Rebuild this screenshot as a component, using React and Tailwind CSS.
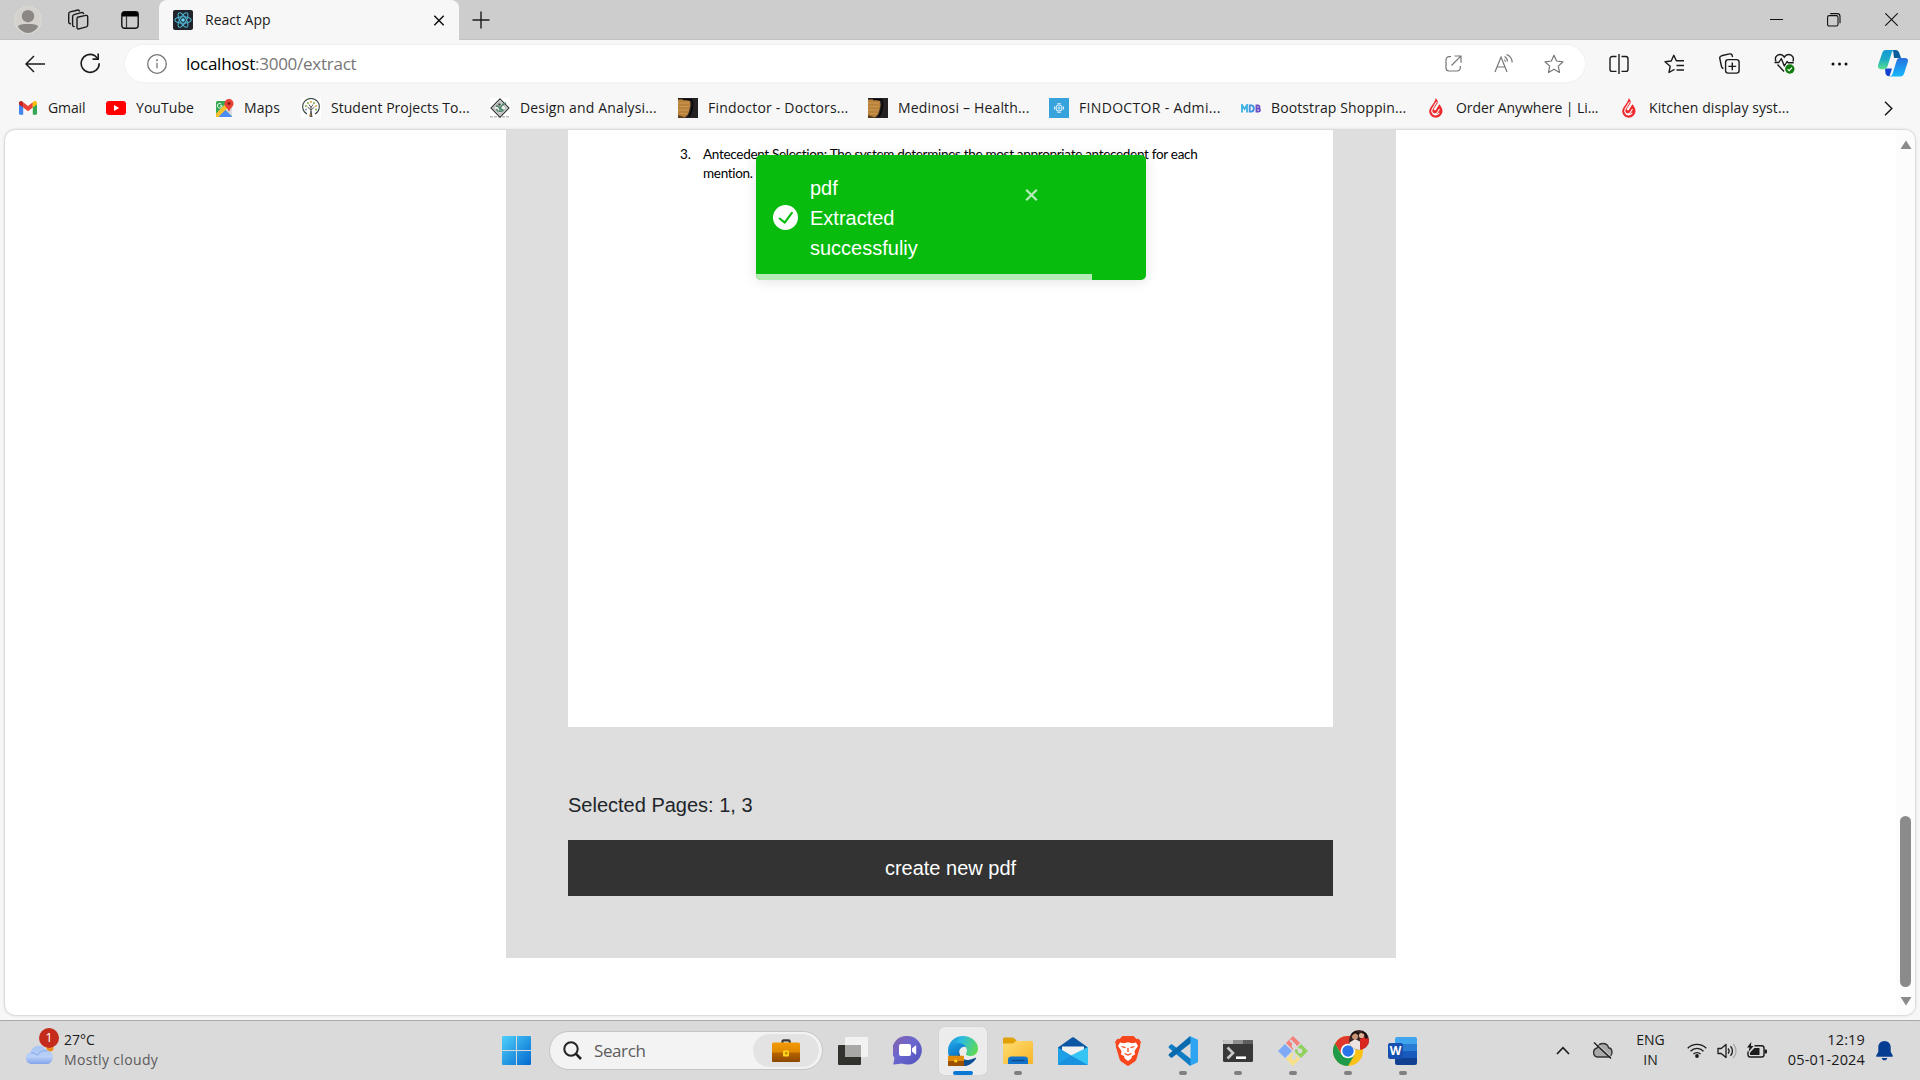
import React from "react";

const Svg = ({ w = 20, h = 20, vb, children, className = "" }) => (
  <svg width={w} height={h} viewBox={vb || `0 0 ${w} ${h}`} fill="none" className={`block shrink-0 ${className}`}>
    {children}
  </svg>
);

/* ---------- Tab strip ---------- */

function ReactIcon() {
  return (
    <Svg>
      <rect width="20" height="20" rx="2" fill="#20232a" />
      <g stroke="#4fb5d3" strokeWidth="1.1">
        <ellipse cx="10" cy="10" rx="8.2" ry="3.2" />
        <ellipse cx="10" cy="10" rx="8.2" ry="3.2" transform="rotate(60 10 10)" />
        <ellipse cx="10" cy="10" rx="8.2" ry="3.2" transform="rotate(120 10 10)" />
      </g>
      <circle cx="10" cy="10" r="1.8" fill="#61dafb" />
    </Svg>
  );
}

function TabStrip() {
  return (
    <div className="flex h-10 items-start bg-[#cdcdcd]">
      <div className="flex h-10 w-[159px] items-center border-b border-[#c2c2c2] pl-[14px]">
        <Svg w={28} h={28}>
          <circle cx="14" cy="14" r="13.4" fill="#d5d2ce" stroke="#dddad6" />
          <circle cx="14" cy="10.2" r="6.2" fill="#8a8784" />
          <path d="M3.8 20.5C5.500 18.600 8 18 14 18s8.500.6 10.200 2.500A13 13 0 0 1 14 27 13 13 0 0 1 3.800 20.500z" fill="#8a8784" />
        </Svg>
        <Svg w={22} h={21} className="ml-[25px]">
          <g stroke="#1b1b1b" strokeWidth="1.4" strokeLinejoin="round" strokeLinecap="round">
            <path d="M10.500 8.300l8.300-1.900c1-.2 1.900.4 1.900 1.500v8c0 .9-.5 1.600-1.400 1.900l-7.300 2.100c-1.100.3-2-.4-2-1.500v-8.300c0-.9.1-1.500.5-1.800z" />
            <path d="M7.300 17.600c-1 0-1.700-.7-1.700-1.700V7.600c0-1 .5-1.700 1.500-2l7-2c1.200-.3 1.900 0 2.500.8" />
            <path d="M3.400 14.800c-1-.2-1.700-.9-1.700-1.800V4.900c0-1 .5-1.700 1.500-2l6.800-1.700c1.100-.3 1.900 0 2.400.7" />
          </g>
        </Svg>
        <Svg w={18} h={18} className="ml-8">
          <rect x=".8" y=".8" width="16.400" height="16.400" rx="2.600" stroke="#111" strokeWidth="1.4" />
          <path d="M1 5.500V3a2 2 0 0 1 2-2h12a2 2 0 0 1 2 2v2.500z" fill="#000" />
          <path d="M5.500 5v12" stroke="#333" strokeWidth="1.2" />
        </Svg>
      </div>
      <div className="flex h-10 w-[300px] items-center rounded-t-lg bg-[#f7f7f7] pl-[14px] pr-[14px]">
        <ReactIcon />
        <span className="mb-0.5 ml-3 text-[14px] text-[#1b1b1b]">React App</span>
        <Svg w={12} h={12} className="ml-auto">
          <path d="M1.300 1.800l9.400 9.400M10.700 1.800l-9.400 9.400" stroke="#111" strokeWidth="1.5" />
        </Svg>
      </div>
      <div className="flex h-10 grow items-center border-b border-[#c2c2c2] pl-[13px] pr-[22px]">
        <Svg w={18} h={18}>
          <path d="M9 .5v17M.5 9h17" stroke="#1b1b1b" strokeWidth="1.4" />
        </Svg>
        <Svg w={13} h={13} className="ml-auto">
          <path d="M0 6.500h13" stroke="#111" />
        </Svg>
        <Svg w={14} h={14} className="ml-11">
          <rect x=".6" y="2.600" width="10.400" height="10.400" rx="1.600" stroke="#111" strokeWidth="1.100" />
          <path d="M3.200.6h7c1.600 0 2.800 1.200 2.800 2.800v6.800" stroke="#111" strokeWidth="1.100" />
        </Svg>
        <Svg w={13} h={13} className="ml-11">
          <path d="M.3.3l12.400 12.400M12.700.3L.3 12.700" stroke="#111" strokeWidth="1.100" />
        </Svg>
      </div>
    </div>
  );
}

/* ---------- Address bar ---------- */

const STAR = "M10 1.300l2.600 5.700 6.400.8-4.700 4.300 1.200 6.300L10 15.200l-5.500 3.200 1.200-6.300L1 7.800l6.400-.8z";

function Copilot() {
  return (
    <Svg w={30} h={27}>
      <defs>
        <linearGradient id="cpA" x1="0" y1="0" x2="0" y2="1">
          <stop offset="0" stopColor="#139bd8" />
          <stop offset=".5" stopColor="#1dabc4" />
          <stop offset="1" stopColor="#5be08e" />
        </linearGradient>
        <linearGradient id="cpB" x1="0" y1="0" x2="0" y2="1">
          <stop offset="0" stopColor="#2870de" />
          <stop offset="1" stopColor="#17b8fb" />
        </linearGradient>
      </defs>
      <path d="M15 0h2.500c2.300 0 3.300 1.300 3.900 3.300L23 8h-7z" fill="#0b5d9b" />
      <path d="M7 18.500h7l-2.500 7.800c-2 .2-3.500-1-4-3z" fill="#1440cf" />
      <path d="M7.500 0H17c-2 0-2.900 1.500-3.500 3.500l-4 13c-.5 1.600-1.500 2.700-3.500 2.700H3c-2.500 0-3.600-2-2.700-4.700L4.200 3C4.900 1 6 0 7.500 0z" fill="url(#cpA)" />
      <path d="M22.500 26.500H11c2 0 3.200-1.500 3.800-3.500l3.900-12.500C19.300 8.800 20.300 8 22 8h5c2.500 0 3.500 1.700 2.700 4.300l-3.600 11.200c-.7 2-1.900 3-3.600 3z" fill="url(#cpB)" />
    </Svg>
  );
}

function Toolbar() {
  return (
    <div className="flex h-12 items-center bg-[#f7f7f7] pb-px pl-[25px] pr-3">
      <Svg w={20} h={18}>
        <path d="M9 1L1 9l8 8M1 9h19" stroke="#1b1b1b" strokeWidth="1.5" />
      </Svg>
      <Svg w={21} h={21} className="ml-[35px]">
        <path d="M19.200 10.200A9 9 0 1 1 14.500 2.500l3.200 3" stroke="#1b1b1b" strokeWidth="1.600" />
        <path d="M18.200.5v5.600h-5.600" stroke="#1b1b1b" strokeWidth="1.600" />
      </Svg>
      <div className="ml-6 flex h-[37px] w-[1460px] items-center rounded-full bg-white pl-[22px] pr-[21px] shadow-[0_0_3px_rgba(0,0,0,0.06)]">
        <Svg>
          <circle cx="10" cy="10" r="9.300" stroke="#767676" strokeWidth="1.300" />
          <path d="M10 8.800v5.400" stroke="#767676" strokeWidth="1.300" />
          <circle cx="10" cy="6.200" r="1" fill="#767676" />
        </Svg>
        <span className="ml-[19px] text-[17px] leading-6 tracking-[-0.25px] text-[#767676]">
          <span className="text-black">localhost</span>:3000/extract
        </span>
        <Svg w={17} h={17} className="ml-auto">
          <path d="M6 1.700H4A3 3 0 0 0 1 4.700V13a3 3 0 0 0 3 3h8.300a3 3 0 0 0 3-3v-2M9.500 1h6.500v6.500M15.800 1.200L6.500 10.500" stroke="#767676" strokeWidth="1.200" />
        </Svg>
        <Svg w={20} h={19} className="ml-8">
          <path d="M1 18L7 3l6 15M3 13h8M10.500 2.500c1.600.8 2.800 2.600 3 5M12.500.5c3.300 1.200 5.500 4.500 5.700 8" stroke="#767676" strokeWidth="1.200" />
          <path d="M10 5.500c.9.500 1.400 1.300 1.500 2.500" stroke="#767676" />
        </Svg>
        <Svg className="ml-[30px]">
          <path d={STAR} stroke="#767676" strokeWidth="1.200" strokeLinejoin="round" />
        </Svg>
      </div>
      <Svg className="ml-6">
        <path d="M7.500 2.500H3.200A2.200 2.200 0 0 0 1 4.700v10.500c0 1.200 1 2.200 2.200 2.200h4.300M12.500 2.500h4.200C18 2.500 19 3.500 19 4.700v10.500c0 1.200-1 2.200-2.200 2.200h-4.300M10 0v20" stroke="#1b1b1b" strokeWidth="1.400" />
      </Svg>
      <Svg w={21} h={20} className="ml-[35px]">
        <path d="M10.500 15.300L5 18.500l1.200-6.200L1 7.800l6.200-.8L9.800 1.300l2.500 5.500H20M12.500 11.500H20M12.500 16H20" stroke="#1b1b1b" strokeWidth="1.400" strokeLinejoin="round" />
      </Svg>
      <Svg w={21} h={21} className="ml-[34px]">
        <rect x="6.600" y="6.600" width="13.500" height="13.500" rx="2.600" stroke="#1b1b1b" strokeWidth="1.400" />
        <path d="M13.300 9.500v7.800M9.400 13.400h7.800M4.500 15.500c-1.200-.2-1.800-1-2-2L.8 5.500C.5 4 1.200 3.200 2.500 2.800l8-1.900c1.500-.3 2.500.5 2.700 1.700l.4 1.400" stroke="#1b1b1b" strokeWidth="1.400" />
      </Svg>
      <Svg w={22} h={21} className="ml-[34px]">
        <path d="M2 8.500C.3 5 2.500 1.500 5.800 1.500c2 0 3.500 1 4.500 2.700 1-1.700 2.600-2.700 4.600-2.700 3.300 0 5.500 3.500 4 7M3.500 11.500l6.500 7" stroke="#1b1b1b" strokeWidth="1.400" />
        <path d="M.5 9.500h4.300l2.500-4 3 7.500 2.800-4.500 1.100 1.200h5.500" stroke="#1b1b1b" strokeWidth="1.400" strokeLinejoin="round" />
        <circle cx="15.800" cy="16" r="4.700" fill="#107c10" />
        <path d="M13.600 16.200l1.500 1.500 2.900-3" stroke="#fff" strokeWidth="1.200" />
      </Svg>
      <Svg w={17} h={4} className="ml-[35px]">
        <circle cx="2" cy="2" r="1.500" fill="#111" />
        <circle cx="8.500" cy="2" r="1.500" fill="#111" />
        <circle cx="15" cy="2" r="1.500" fill="#111" />
      </Svg>
      <span className="ml-auto"><Copilot /></span>
    </div>
  );
}

/* ---------- Bookmarks ---------- */

const Gmail = () => (
  <Svg w={18} h={14}>
    <path d="M0 1.800L4.200 5v8.800H1.300C.6 13.800 0 13.200 0 12.500z" fill="#4285f4" />
    <path d="M18 1.800L13.800 5v8.800h2.900c.7 0 1.300-.6 1.300-1.300z" fill="#34a853" />
    <path d="M4.200 1.300L9 5l4.800-3.700v5.300L9 10.200 4.200 6.600z" fill="#ea4335" />
    <path d="M0 2C0 .3 1.900-.6 3.200.5l1 .8v5.300L0 3.500z" fill="#c5221f" />
    <path d="M18 2c0-1.700-1.900-2.600-3.200-1.500l-1 .8v5.300L18 3.500z" fill="#fbbc04" />
  </Svg>
);
const YouTube = () => (
  <Svg w={20} h={14}>
    <rect width="20" height="14" rx="3" fill="#f00" />
    <path d="M8 4l5.200 3L8 10z" fill="#fff" />
  </Svg>
);
const Maps = () => (
  <Svg w={19} h={19}>
    <rect x="1" y="2" width="16" height="16" rx="1.500" fill="#34a853" />
    <path d="M17 7v10.500L9.500 10z" fill="#dadce0" />
    <path d="M1.500 18L9.300 10l7.500 8z" fill="#4285f4" />
    <path d="M1 14.500L13 2.500l3 3L3.500 18H1z" fill="#fbc02d" />
    <path d="M5 18l6-6 6 6z" fill="#4b8df8" />
    <path d="M7 6.500a2.300 2.300 0 1 1-.8-1.500M5 6.800h2" stroke="#fff" strokeWidth="1" />
    <path d="M14 0a4.500 4.500 0 0 1 4.500 4.500C18.500 8 15 9 14 13c-1-4-4.500-5-4.500-8.500A4.500 4.500 0 0 1 14 0z" fill="#e84335" />
    <circle cx="14" cy="4.500" r="1.600" fill="#8c1b12" />
  </Svg>
);
const Tree = () => (
  <Svg>
    <rect width="20" height="20" fill="#fff" />
    <path d="M6 16A8.300 8.300 0 1 1 14 16" stroke="#3d4a44" strokeWidth="1.100" />
    <path d="M10 9v9M10 12L6.500 9M10 12l3.500-3M10 9.500L8 6.500M10 9.500l2-3" stroke="#555" strokeWidth="1" />
    <path d="M8.500 19l1-6h1l1 6z" fill="#555" />
    <g fill="#7fae3e">
      <circle cx="5" cy="8" r="1" /><circle cx="7" cy="5" r="1" /><circle cx="13" cy="5" r="1" />
    </g>
    <g fill="#e0a53c">
      <circle cx="10" cy="4" r="1" /><circle cx="15" cy="8" r="1" /><circle cx="9" cy="17" r=".9" />
    </g>
    <circle cx="5" cy="11.500" r=".9" fill="#6b8f9d" /><circle cx="15" cy="11.500" r=".9" fill="#6d9b42" />
  </Svg>
);
const Diamond = () => (
  <Svg>
    <rect width="20" height="20" fill="#fff" />
    <path d="M0 18.800h20" stroke="#bbb" strokeWidth="1.500" strokeDasharray="3 1" />
    <path d="M10 .8l9 9.200-9 9.200L1 10z" fill="#eef0ef" stroke="#333" strokeWidth="1.100" />
    <path d="M10 3.500l6.400 6.500-6.400 6.500L3.600 10z" stroke="#777" strokeWidth=".8" />
    <path d="M6 8c2 0 3.500 1 4 3 .8-3 3-5 6-6M6.500 11c1 3 5 3.500 7 .5M7.500 7.500l5 5" stroke="#4b8466" strokeWidth="1.500" />
    <circle cx="9.500" cy="6.500" r="1.200" fill="#38413c" />
  </Svg>
);
const Brush = () => (
  <Svg>
    <rect width="20" height="20" fill="#262224" />
    <path d="M0 1.500h6l6 1.500.5 4-1 5-1.500 4.500-3 3L3 19l-3-1.500z" fill="#b9823c" />
    <path d="M0 5h11M1 8.500h10M0 12h10.500M2 15.500h7" stroke="#cc9850" strokeWidth="1" />
    <path d="M5 1.500h8l1.500 2c.3 5-.8 10.500-3.500 15" stroke="#080808" strokeWidth="1.600" />
    <path d="M0 17l6 2v1H0z" fill="#5a3d1b" />
  </Svg>
);
const Findoctor = () => (
  <Svg>
    <rect width="20" height="20" fill="#37a3dd" />
    <g stroke="#d8effb" strokeWidth="1.100">
      <circle cx="10" cy="10" r="3" />
      <path d="M8 5.800h4M8 14.200h4M5.500 8.500v3M14.500 8.500v3M8.500 10h3M10 8.500v3" />
    </g>
  </Svg>
);
const Mdb = () => (
  <Svg h={9}>
    <g strokeWidth="1.900">
      <path d="M1 8.500V1l2.500 4L6 1v7.500" stroke="#41b4e6" />
      <path d="M8.700 1.400v6.200h1.500c3.500 0 3.500-6.200 0-6.200z" stroke="#3f93df" />
      <path d="M15.500 1.400v6.200h2c2 0 2-3 0-3h-2 1.700c1.700 0 1.700-3.200 0-3.200z" stroke="#6a4fc8" />
    </g>
  </Svg>
);
const Flame = () => (
  <Svg w={14} h={20}>
    <path d="M6.800 0c1 1.800 2.600 3 1.700 5.200L5 10.500c-.8 1.400 1 2.600 2 1.200l3.300-5.400C12 8.300 13.800 11 13.500 13.500 13 17 10 19.700 6.800 19.700S.5 17.200.2 13.500C0 9.500 5.800 5.500 6.800 0z" fill="#ee2a2e" />
    <path d="M7.500 4L3.300 11c-2 4 3 6.600 5.200 3.200l2-3.200M3.500 15.500c1.500 2 5 2 6.800-.7" stroke="#f7f7f7" strokeWidth="1.100" />
  </Svg>
);

const BOOKMARKS = [
  { icon: Gmail, label: "Gmail", cell: "w-[87px]", gap: "w-[29px]", track: "tracking-[-0.1px]" },
  { icon: YouTube, label: "YouTube", cell: "w-[109px]", gap: "w-[30px]", track: "tracking-[0.05px]" },
  { icon: Maps, label: "Maps", cell: "w-[86px]", gap: "w-[29px]", track: "tracking-[0.1px]" },
  { icon: Tree, label: "Student Projects To...", cell: "w-[189px]", gap: "w-[30px]", track: "tracking-[0.03px]" },
  { icon: Diamond, label: "Design and Analysi...", cell: "w-[188px]", gap: "w-[30px]", track: "tracking-[0.15px]" },
  { icon: Brush, label: "Findoctor - Doctors...", cell: "w-[190px]", gap: "w-[30px]", track: "tracking-[0.2px]" },
  { icon: Brush, label: "Medinosi – Health...", cell: "w-[181px]", gap: "w-[30px]", track: "tracking-[0.17px]" },
  { icon: Findoctor, label: "FINDOCTOR - Admi...", cell: "w-[192px]", gap: "w-[30px]", track: "tracking-[0.33px]" },
  { icon: Mdb, label: "Bootstrap Shoppin...", cell: "w-[188px]", gap: "w-[30px]", track: "tracking-[0.1px]" },
  { icon: Flame, label: "Order Anywhere | Li...", cell: "w-[193px]", gap: "w-[27px]", track: "tracking-[-0.1px]" },
  { icon: Flame, label: "Kitchen display syst...", cell: "w-[190px]", gap: "w-[27px]", track: "tracking-[0.09px]" },
];

function Bookmarks() {
  return (
    <div className="flex h-[41px] items-center bg-[#f7f7f7] pb-px pl-[19px] pr-[27px]">
      {BOOKMARKS.map(({ icon: Icon, label, cell, gap, track }, i) => (
        <div key={i} className={`flex shrink-0 items-center ${cell}`}>
          <span className={`shrink-0 ${gap}`}><Icon /></span>
          <span className={`whitespace-nowrap pb-px text-[14px] leading-5 text-[#1b1b1b] ${track}`}>{label}</span>
        </div>
      ))}
      <Svg w={9} h={15} className="ml-auto">
        <path d="M1 .7l6.800 6.800L1 14.300" stroke="#1b1b1b" strokeWidth="1.500" />
      </Svg>
    </div>
  );
}

/* ---------- Page ---------- */

function Toast() {
  return (
    <div className="absolute left-[751px] top-[25px] flex h-[125px] w-[390px] flex-col overflow-hidden rounded-[5px] bg-[#07bc0c] font-['Liberation_Sans',sans-serif] text-[20px] leading-[30px] text-white shadow-[0_1px_13px_rgba(0,0,0,0.12)]">
      <div className="flex h-[119px] items-start pl-[17px] pt-[18px]">
        <Svg w={25} h={25} vb="0 0 24 24" className="mt-8">
          <path fill="#fff" d="M12 0a12 12 0 1012 12A12.014 12.014 0 0012 0zm6.927 8.200l-6.845 9.289a1.011 1.011 0 01-1.430.188l-4.888-3.908a1 1 0 111.250-1.562l4.076 3.261 6.227-8.451a1 1 0 111.610 1.183z" />
        </Svg>
        <p className="ml-3 w-[120px]">pdf<br />Extracted<br />successfuliy</p>
        <Svg w={13} h={14} className="ml-[95px] mt-[15px]">
          <path d="M1.200 1.700l10.600 10.600M11.800 1.700L1.200 12.300" stroke="#b5ebb6" strokeWidth="2.300" />
        </Svg>
      </div>
      <div className="h-1.5 w-[336px] bg-[#b5ebb6]" />
    </div>
  );
}

function Page() {
  return (
    <div className="flex h-[891px] flex-col bg-[#f7f7f7] px-[5px] pt-px">
      <div className="relative flex h-[885px] overflow-hidden rounded-[10px] bg-white shadow-[0_0_3px_rgba(0,0,0,0.3)]">
        <main className="ml-[501px] h-[828px] w-[890px] bg-[#dedede] pl-[62px] pr-[63px] font-['Liberation_Sans',sans-serif] text-[20px] text-[#212529]">
          <section className="h-[597px] bg-white pt-[15px] font-[Lato,sans-serif] text-[13.500px] leading-[19px] text-black">
            <div className="flex pl-[112px]">
              <span className="w-[23px] shrink-0">3.</span>
              <p className="whitespace-nowrap tracking-[-0.3px]">
                Antecedent Selection: The system determines the most appropriate antecedent for each<br />mention.
              </p>
            </div>
          </section>
          <p className="mt-[63px] leading-[30px]">Selected Pages: 1, 3</p>
          <button className="mt-5 block h-14 w-full bg-[#333] text-white">create new pdf</button>
        </main>
        <aside className="ml-auto flex w-[19px] flex-col items-center bg-[#fcfcfc] pb-[9px] pt-[10px]">
          <Svg w={12} h={9}><path d="M6 .5L11.500 9H.5z" fill="#8b8b8b" /></Svg>
          <div className="mt-auto h-[171px] w-[11px] rounded-full bg-[#8b8b8b]" />
          <Svg w={12} h={9} className="mt-[10px]"><path d="M6 8.500L.5 0h11z" fill="#8b8b8b" /></Svg>
        </aside>
        <Toast />
      </div>
    </div>
  );
}

/* ---------- Taskbar ---------- */

const Windows = () => (
  <Svg w={29} h={29}>
    <defs>
      <linearGradient id="win" x1="0" y1="0" x2="29" y2="29" gradientUnits="userSpaceOnUse">
        <stop stopColor="#4fd0fb" />
        <stop offset="1" stopColor="#0268cf" />
      </linearGradient>
    </defs>
    <path d="M1 0h13v14H0V1a1 1 0 0 1 1-1zM15 0h13a1 1 0 0 1 1 1v13H15zM0 15h14v14H1a1 1 0 0 1-1-1zM15 15h14v13a1 1 0 0 1-1 1H15z" fill="url(#win)" />
  </Svg>
);

const Briefcase = ({ w = 28, h = 24, className }) => (
  <Svg w={w} h={h} vb="0 0 28 24" className={className}>
    <defs>
      <linearGradient id="bcT" x1="0" y1="0" x2="0" y2="1"><stop stopColor="#f39a06" /><stop offset="1" stopColor="#cb7600" /></linearGradient>
      <linearGradient id="bcB" x1="0" y1="0" x2="0" y2="1"><stop stopColor="#b96500" /><stop offset="1" stopColor="#8b4700" /></linearGradient>
    </defs>
    <path d="M10.500 4V2.500c0-.7.500-1.200 1.200-1.200h4.800c.7 0 1.200.5 1.200 1.200V4" stroke="#383838" strokeWidth="2.200" />
    <rect y="3.500" width="28" height="19.500" rx="1.500" fill="url(#bcT)" />
    <path d="M0 13.500h28v8c0 1-.7 1.500-1.500 1.500h-25C.7 23 0 22.500 0 21.500z" fill="url(#bcB)" />
    <rect x="11" y="11.500" width="6" height="6" rx="1" fill="#ffd61c" />
    <rect x="13" y="13" width="2.500" height="2.500" fill="#c98c00" />
  </Svg>
);

const TaskView = () => (
  <Svg w={30} h={28}>
    <rect y="8" width="23" height="20" rx="1" fill="#31312e" />
    <rect x="7" width="23" height="20" rx="1" fill="#f5f5f5" opacity=".88" />
    <path d="M7 8h16v12H7z" fill="#a8a8a6" />
  </Svg>
);

const Chat = () => (
  <Svg w={29} h={29}>
    <defs>
      <linearGradient id="chat" x1="0" y1="0" x2="1" y2="1"><stop stopColor="#8a63a8" /><stop offset=".45" stopColor="#6b67cf" /><stop offset="1" stopColor="#4e51bb" /></linearGradient>
    </defs>
    <path d="M14.500 0A14.300 14.300 0 1 1 9 27.500L1 28.500c-.6 0-.8-.4-.6-1l1-5.500A14.300 14.300 0 0 1 14.500 0z" fill="url(#chat)" />
    <rect x="6" y="8" width="12" height="12" rx="2" fill="#fff" />
    <path d="M19 12.500l3.500-3c.4-.3.700 0 .7.400v8.200c0 .4-.3.700-.7.400l-3.500-3z" fill="#fff" />
  </Svg>
);

const Edge = () => (
  <Svg w={30} h={30}>
    <defs>
      <linearGradient id="eA" x1="0" y1="0" x2="30" y2="14" gradientUnits="userSpaceOnUse"><stop stopColor="#1683d8" /><stop offset=".4" stopColor="#2bbbe4" /><stop offset="1" stopColor="#61dc4d" /></linearGradient>
      <linearGradient id="eB" x1="0" y1="8" x2="12" y2="30" gradientUnits="userSpaceOnUse"><stop stopColor="#1aa1e6" /><stop offset="1" stopColor="#0858b0" /></linearGradient>
    </defs>
    <path d="M0 14C.5 6 7 0 15 0c8.500 0 15 6 15 12.500 0 4.500-3 7.500-7 7.500-3.500 0-5.500-1-5-2.500.3-.8 1-1.300 1-3C19 11 15 8 10 8 5 8 1 10.500 0 14z" fill="url(#eA)" />
    <path d="M0 15c0-4.500 4-8 9.500-8 4 0 7 1.500 8.500 4-4-1.500-7 2-7 6 0 6 5 11 11 11-2 1.500-4.500 2-7 2C6.500 30 0 23.500 0 15z" fill="url(#eB)" />
    <path d="M11.500 15c-1 6 4.500 10 10 8.700 2.500-.4 4.500-1.500 6-2 .5-.1.900.3.6.8C25.500 27 20.500 30 15 30c-3 0-5-5-5-9z" fill="#0d4f91" />
    <g transform="translate(0 18) scale(.57 .52)">
      <rect y="3.500" width="28" height="20" rx="1.500" fill="#e08b0a" />
      <path d="M0 13.500h28v9.500H0z" fill="#9b5100" />
      <rect x="11" y="11" width="5" height="5" fill="#ffd61c" />
    </g>
  </Svg>
);

const Explorer = () => (
  <Svg w={30} h={28}>
    <defs>
      <linearGradient id="fx" x1="0" y1="0" x2="1" y2="1"><stop stopColor="#ffdd72" /><stop offset="1" stopColor="#f7b527" /></linearGradient>
    </defs>
    <path d="M0 2c0-1 .6-1.500 1.500-1.500h8c.7 0 1.200.2 1.700.7L14 4v8H0z" fill="#e0a008" />
    <path d="M0 6.500h10L13 4h15.500c.9 0 1.500.6 1.500 1.500v20c0 1-.6 1.500-1.500 1.500h-27C.6 27 0 26.500 0 25.500z" fill="url(#fx)" />
    <path d="M5 27v-4.500C5 20.600 6.600 19.500 8.300 19.500h13.400c1.700 0 3.300 1.100 3.300 3V27z" fill="#1273c8" />
    <path d="M8.500 23.500h13" stroke="#0a4b91" strokeWidth="1.500" />
  </Svg>
);

const Mail = () => (
  <Svg w={30} h={28}>
    <path d="M0 10.500L14 .5c.7-.5 1.300-.5 2 0l14 10V14H0z" fill="#0b57a3" />
    <path d="M4 9.500h22v6L15 21 4 15.500z" fill="#f1f1f1" />
    <path d="M0 10.500l15 9L30 10v17c0 .6-.4 1-1 1H1c-.6 0-1-.4-1-1z" fill="#1da0e6" />
    <path d="M30 10v17c0 .5-.4.800-.7.800L13 18.500z" fill="#35c4f3" />
    <path d="M13 18.500L29.500 28H1c-.7 0-1-.5-1-1z" fill="#1688dc" opacity=".65" />
  </Svg>
);

const VsCode = () => (
  <Svg w={30} h={30}>
    <path d="M.8 10.300l2-1.800c.5-.4 1-.4 1.500 0L23 23v6.500c-.7.200-1.400 0-2-.6L1 12c-.5-.5-.6-1.200-.2-1.700z" fill="#0f7cc4" />
    <path d="M.8 19.700l2 1.800c.5.4 1 .4 1.500 0L23 7V.5c-.7-.2-1.400 0-2 .6L1 18c-.5.500-.6 1.200-.2 1.700z" fill="#0a6ab0" />
    <path d="M22 .3l7 3c.6.300 1 .8 1 1.500v20.400c0 .7-.4 1.200-1 1.500l-7 3c-.7.300-1.300.2-1.800-.3 1 .5 2.300 0 2.300-1.400V2c0-1.400-1.300-1.900-2.300-1.400.5-.5 1.100-.6 1.800-.3z" fill="#2fa5f1" />
  </Svg>
);

const Terminal = () => (
  <Svg w={30} h={22}>
    <rect width="30" height="22" rx="1.500" fill="#383838" />
    <path d="M0 4V1.500C0 .5.5 0 1.500 0H10v4z" fill="#c6c6c6" />
    <path d="M10 0h10v4H10z" fill="#8f8f8f" />
    <path d="M20 0h8.500c1 0 1.500.5 1.500 1.500V4H20z" fill="#5e5e5e" />
    <path d="M4.500 7.500l5.500 5.500-5.500 5.500" stroke="#c9c9c9" strokeWidth="2.600" />
    <path d="M13 17.700h10" stroke="#fff" strokeWidth="2.600" />
  </Svg>
);

const Git = () => (
  <Svg w={30} h={30}>
    <path d="M15 0l7 7-7 7-7-7z" fill="#f47f7b" />
    <path d="M7 8l7 7-7 7-7-7z" fill="#7eaaf7" />
    <path d="M23 8l7 7-7 7-7-7z" fill="#8fd35e" />
    <path d="M15 16l7 7-7 7-7-7z" fill="#f8e08a" />
    <path d="M12 4l4 4v14M16 9l6 6" stroke="#dadada" strokeWidth="2" />
    <circle cx="16" cy="10" r="2.400" fill="#dadada" /><circle cx="22" cy="15" r="2.400" fill="#dadada" /><circle cx="16" cy="21.500" r="2.400" fill="#dadada" />
  </Svg>
);

const Chrome = () => (
  <span className="relative block">
    <Svg w={30} h={30}>
      <circle cx="15" cy="15" r="15" fill="#fbc116" />
      <path d="M2 7.500A15 15 0 0 1 28 7.500L15 8 9 18.800z" fill="#df382c" />
      <path d="M2 7.500A15 15 0 0 0 15 30l6.500-11.300H8.500z" fill="#1f9a4b" />
      <circle cx="15" cy="15" r="7.300" fill="#fff" />
      <circle cx="15" cy="15" r="5.700" fill="#2b73e8" />
    </Svg>
    <Svg className="absolute -top-[6px] left-4">
      <defs><clipPath id="av"><circle cx="10" cy="10" r="10" /></clipPath></defs>
      <g clipPath="url(#av)">
        <rect width="20" height="20" fill="#3d2725" />
        <path d="M0 13l6-4 6 3v8H0z" fill="#ece5e2" />
        <path d="M11 9l4-2 5 2v11h-9z" fill="#d9261f" />
        <circle cx="6" cy="6.500" r="3" fill="#c99376" />
        <circle cx="12.500" cy="5.500" r="2.600" fill="#deb096" />
        <path d="M3 5c1-4 6-4 6-.5M13 2.500c3-1 5 2 4 6" stroke="#1d1211" strokeWidth="2" />
      </g>
    </Svg>
  </span>
);

const Word = () => (
  <span className="relative flex h-7 w-[29px] justify-end">
    <span className="flex w-[22px] flex-col overflow-hidden rounded-[2px]">
      <span className="h-[7px] bg-[#41a5ee]" />
      <span className="h-[7px] bg-[#2b7cd3]" />
      <span className="h-[7px] bg-[#185abd]" />
      <span className="h-[7px] bg-[#103f91]" />
    </span>
    <span className="absolute left-0 top-1.5 flex h-4 w-[15px] items-center justify-center rounded-[2px] bg-[#1550b0] text-[12px] font-bold leading-none text-white">W</span>
  </span>
);

const BraveLion = () => (
  <Svg w={26} h={30}>
    <path d="M7.500 0h11l3 3 2-.3L26 6l-1 3 .3 1L21.500 23c-.4 1.300-1 2-2 2.700L14 29.500c-.7.500-1.300.5-2 0l-5.500-3.800c-1-.7-1.600-1.400-2-2.700L.7 10 1 9 0 6l2.500-3.300 2 .3z" fill="#f9471d" />
    <path d="M5 6.500l4 .7 4-.9 4 .9 4-.7 2 3.500-3.500 5 .5 3.500-3 1.500-.7 2.500L13 25l-3.300-2.500L9 20l-3-1.500.5-3.500L3 10z" fill="#fff" />
    <path d="M6.500 10.500l4 1.200M19.500 10.500l-4 1.200M13 12v4M9.500 17.500l3.500 1.500 3.500-1.500" stroke="#f9471d" strokeWidth="1.300" />
  </Svg>
);

const APPS = [
  { icon: TaskView },
  { icon: Chat },
  { icon: Edge, active: true },
  { icon: Explorer, running: true },
  { icon: Mail },
  { icon: BraveLion },
  { icon: VsCode, running: true },
  { icon: Terminal, running: true },
  { icon: Git, running: true },
  { icon: Chrome, running: true },
  { icon: Word, running: true },
];

function AppButton({ icon: Icon, active, running }) {
  return (
    <div className="flex w-[55px] justify-center">
      <div className={active ? "flex h-12 w-12 flex-col items-center rounded-[5px] bg-[#ececec] shadow-[0_0_1px_rgba(0,0,0,0.2)]" : "flex h-12 w-12 flex-col items-center"}>
        <span className="flex h-12 items-center"><Icon /></span>
        {active && <span className="-mt-1 h-1 w-5 shrink-0 rounded-full bg-[#0a78d4]" />}
        {running && <span className="-mt-1 h-1 w-2 shrink-0 rounded-full bg-[#808080]" />}
      </div>
    </div>
  );
}

function Weather() {
  return (
    <div className="flex w-[502px] items-center pl-[25px]">
      <span className="relative block h-[19px] w-[30px]">
        <Svg w={30} h={19} className="mt-1">
          <defs>
            <linearGradient id="cl" x1="0" y1="0" x2="0" y2="1"><stop stopColor="#a9c4f3" /><stop offset=".6" stopColor="#b9d0f7" /><stop offset="1" stopColor="#82a4ea" /></linearGradient>
          </defs>
          <circle cx="25" cy="3" r="3.500" fill="#ef8a1d" />
          <path d="M6 19a6 6 0 0 1-.5-11.800A8.300 8.300 0 0 1 20.800 5 7.200 7.200 0 0 1 23 19z" fill="url(#cl)" />
          <path d="M6 8c3-.5 5 .5 6.500 2.500C14 7 18 5 22 6" stroke="#7fa3e6" strokeWidth=".9" />
        </Svg>
        <span className="absolute -top-[13px] left-[14px] flex h-5 w-5 items-center justify-center rounded-full bg-[#c42b1c] pb-px text-[13px] leading-none text-white">1</span>
      </span>
      <div className="mb-0.5 ml-[9px] flex flex-col text-[14px] leading-5 text-[#1b1b1b]">
        <span>27°C</span>
        <span className="tracking-[0.35px] text-[#5a5a5a]">Mostly cloudy</span>
      </div>
    </div>
  );
}

function Taskbar() {
  return (
    <div className="flex h-[60px] items-center border-t border-[#a9a9a9] bg-[#dadada]">
      <Weather />
      <Windows />
      <div className="ml-[18px] mr-0.5 flex h-[39px] w-[274px] items-center rounded-full border border-[#c4c4c4] bg-[#f3f3f3] pl-[13px] pr-[3px]">
        <Svg w={19} h={19}>
          <circle cx="8" cy="8" r="6.700" stroke="#222" strokeWidth="2" />
          <path d="M12.700 12.700l5.300 5.300" stroke="#222" strokeWidth="2.600" />
        </Svg>
        <span className="ml-3 text-[17px] leading-6 tracking-[-0.4px] text-[#5c5c5c]">Search</span>
        <span className="ml-auto flex h-[33px] w-[66px] items-center justify-center rounded-full bg-[#e3e3e3]"><Briefcase /></span>
      </div>
      {APPS.map((app, i) => <AppButton key={i} {...app} />)}
      <div className="ml-auto flex items-center pr-[27px] text-[14px] leading-5 text-[#1b1b1b]">
        <Svg w={14} h={9}><path d="M1 8l6-6.300L13 8" stroke="#1b1b1b" strokeWidth="1.600" /></Svg>
        <Svg w={21} h={17} className="ml-[22px]">
          <path d="M5.500 15a4.600 4.600 0 0 1-.4-9C6 3 8.300 1.500 11 1.500c3 0 5 1.800 5.600 4.300 2 .3 3.400 2.100 3.400 4.500 0 2.700-2 4.700-4.500 4.700z" fill="#a9a9a9" stroke="#333" strokeWidth="1.400" />
          <path d="M2 .5l17 16" stroke="#222" strokeWidth="1.500" />
          <path d="M3.500 0l17 16" stroke="#dadada" strokeWidth=".8" />
        </Svg>
        <div className="mb-0.5 ml-[23px] flex w-[29px] flex-col items-center"><span>ENG</span><span>IN</span></div>
        <Svg w={20} h={15} className="ml-[22px]">
          <path d="M.7 5.200c5.200-5.200 13.400-5.200 18.600 0M3.500 8.200c3.600-3.700 9.400-3.700 13 0M6.400 11.100c2-2.100 5.200-2.100 7.200 0" stroke="#1b1b1b" strokeWidth="1.300" />
          <circle cx="10" cy="13" r="1.900" fill="#1b1b1b" />
        </Svg>
        <Svg w={20} h={16} className="ml-[10px]">
          <path d="M1 5.500h3.200L9 1.500v13l-4.800-4H1z" stroke="#1b1b1b" strokeWidth="1.300" strokeLinejoin="round" />
          <path d="M11 5.500c1.300 1.400 1.300 3.600 0 5M13.500 3.300c2.600 2.600 2.600 6.800 0 9.400" stroke="#1b1b1b" strokeWidth="1.300" />
          <path d="M16 1c4 3.700 4 10.300 0 14" stroke="#aaa" strokeWidth="1.200" />
        </Svg>
        <Svg w={20} h={17} className="ml-[10px]">
          <path d="M7.500 3.800h7.200c1.300 0 2.300 1 2.300 2.300v6.600c0 1.300-1 2.300-2.300 2.300H3.300C2 15 1 14 1 12.700V9.500" stroke="#1b1b1b" strokeWidth="1.400" />
          <path d="M8 6h4.500v7H3v-2.500L7.500 6z" fill="#1b1b1b" />
          <path d="M17.500 7.500H19c.6 0 1 .5 1 1v2c0 .5-.4 1-1 1h-1.500zM4.300 0L0 5.500h2.500L1.500 10 6.500 4H4z" fill="#1b1b1b" />
        </Svg>
        <div className="mb-0.5 ml-5 flex w-[78px] flex-col items-end whitespace-nowrap text-[14.500px] tracking-[0.15px]"><span>12:19</span><span>05-01-2024</span></div>
        <Svg w={17} h={20} className="ml-[11px]">
          <path d="M8.500 0c3.600 0 6.200 2.800 6.200 6.300v4.500l2 3.700c.3.700 0 1.300-.8 1.300H1.100c-.8 0-1.100-.6-.8-1.300l2-3.700V6.300C2.300 2.800 4.900 0 8.500 0zM5.700 17h5.600c-.3 1.500-1.400 2.300-2.800 2.300S6 18.500 5.700 17z" fill="#043d91" />
        </Svg>
      </div>
    </div>
  );
}

export default function App() {
  return (
    <div className="flex h-[1080px] w-[1920px] flex-col overflow-hidden bg-[#f7f7f7] font-['Open_Sans','Noto_Sans',sans-serif]">
      <TabStrip />
      <Toolbar />
      <Bookmarks />
      <Page />
      <Taskbar />
    </div>
  );
}
